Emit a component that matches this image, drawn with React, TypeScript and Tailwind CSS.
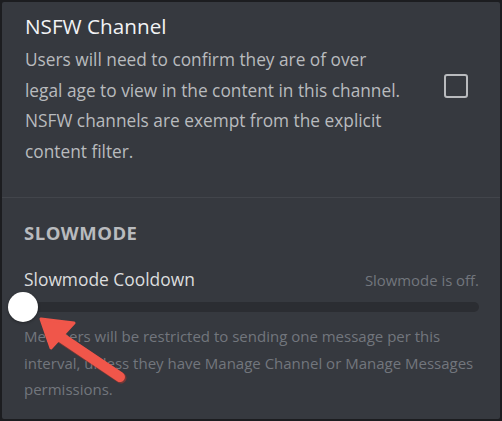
import React from 'react';

const App: React.FC = () => {
  return (
    <div
      className="w-[502px] h-[421px] bg-[#1c1d20] p-[2px] overflow-hidden"
      style={{ fontFamily: '"Open Sans", "Noto Sans", sans-serif' }}
    >
      <div className="relative w-full h-full bg-[#36393f] rounded-[2px]">
        {/* NSFW */}
        <div className="flex items-start pl-[23px] pr-[32px] pt-[10px]">
          <div className="flex-1 whitespace-nowrap">
            <h2 className="text-[20.7px] leading-[28px] text-[#f2f3f5]">NSFW Channel</h2>
            <p className="mt-[5px] text-[17.3px] leading-[30.5px] text-[#b9bbbe]">
              Users will need to confirm they are of over
              <br />
              legal age to view in the content in this channel.
              <br />
              NSFW channels are exempt from the explicit
              <br />
              content filter.
            </p>
          </div>
          <div className="mt-[62px] ml-4 w-[24px] h-[24px] rounded-[3px] border-[2.5px] border-[#b9bbbe]" />
        </div>

        <div className="mt-[30px] h-px bg-[#42454b]" />

        {/* Slowmode */}
        <div className="pl-[22px] pr-[21px] pt-[23px]">
          <h3 className="text-[18.5px] leading-[24px] font-bold uppercase tracking-[0.5px] text-[#b9bbbe]">
            Slowmode
          </h3>
          <div className="mt-[22px] flex items-end justify-between">
            <span className="text-[17.4px] leading-[24px] text-[#dcddde]">Slowmode Cooldown</span>
            <span className="text-[14.9px] leading-[22px] text-[#72767d]">Slowmode is off.</span>
          </div>
          <div className="relative mt-[11px] ml-[-16px] h-[10px] rounded-full bg-[#2b2d32]">
            <div className="absolute left-0 top-[-10px] w-[30px] h-[30px] rounded-full bg-white shadow-[0_1px_3px_rgba(0,0,0,0.35)]" />
          </div>
          <p className="mt-[11px] whitespace-nowrap text-[15px] leading-[26.5px] text-[#72767d]">
            Members will be restricted to sending one message per this
            <br />
            interval, unless they have Manage Channel or Manage Messages
            <br />
            permissions.
          </p>
        </div>

        {/* annotation arrow */}
        <svg className="absolute left-0 top-0 pointer-events-none" width="498" height="417" viewBox="0 0 498 417">
          <g transform="translate(-2,-2)">
            <line x1="58" y1="336" x2="121" y2="378" stroke="#b5382f" strokeWidth="11" strokeLinecap="round" opacity="0.5" />
            <line x1="56" y1="334" x2="120" y2="377" stroke="#f0564a" strokeWidth="10" strokeLinecap="round" />
            <polygon points="41,319 74,323 51,348" fill="#f0564a" stroke="#f0564a" strokeWidth="3" strokeLinejoin="round" />
          </g>
        </svg>
      </div>
    </div>
  );
};

export default App;
